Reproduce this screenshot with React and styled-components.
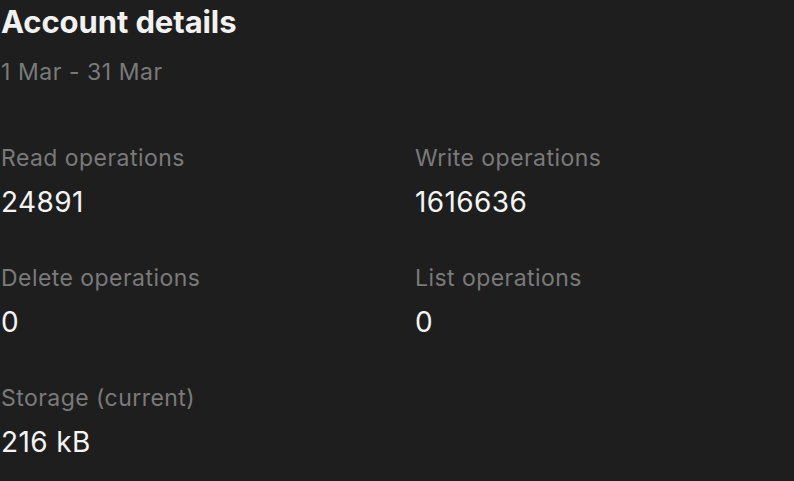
import React from "react";
import styled, { createGlobalStyle } from "styled-components";

const Global = createGlobalStyle`
  html, body { margin: 0; padding: 0; background: #1e1e1e; }
  body { font-family: Inter, "Noto Sans", sans-serif; -webkit-font-smoothing: antialiased; }
`;

const Page = styled.div`
  padding: 3px 2px 0 1px;
  min-height: 481px;
  box-sizing: border-box;
  background: #1e1e1e;
`;

const Title = styled.h1`
  margin: 0;
  font-size: 31px;
  font-weight: 700;
  color: #f2f2f2;
  line-height: 38px;
  letter-spacing: -0.1px;
`;

const Subtitle = styled.div`
  margin-top: 17px;
  font-size: 23px;
  color: #7a7a7a;
  line-height: 28px;
  letter-spacing: 0.55px;
`;

const Grid = styled.div`
  margin-top: 58px;
  display: grid;
  grid-template-columns: 414px 1fr;
  row-gap: 45px;
`;

const Stat = styled.div`
  display: flex;
  flex-direction: column;
  gap: 13px;
`;

const Label = styled.div`
  font-size: 23px;
  color: #7a7a7a;
  line-height: 28px;
  letter-spacing: 0.45px;
`;

const Value = styled.div`
  font-size: 28px;
  color: #f4f4f4;
  line-height: 34px;
  letter-spacing: 0.4px;
`;

const stats = [
  ["Read operations", "24891"],
  ["Write operations", "1616636"],
  ["Delete operations", "0"],
  ["List operations", "0"],
  ["Storage (current)", "216 kB"],
];

export default function App() {
  return (
    <>
      <Global />
      <Page>
        <Title>Account details</Title>
        <Subtitle>1 Mar - 31 Mar</Subtitle>
        <Grid>
          {stats.map(([l, v]) => (
            <Stat key={l}>
              <Label>{l}</Label>
              <Value>{v}</Value>
            </Stat>
          ))}
        </Grid>
      </Page>
    </>
  );
}
